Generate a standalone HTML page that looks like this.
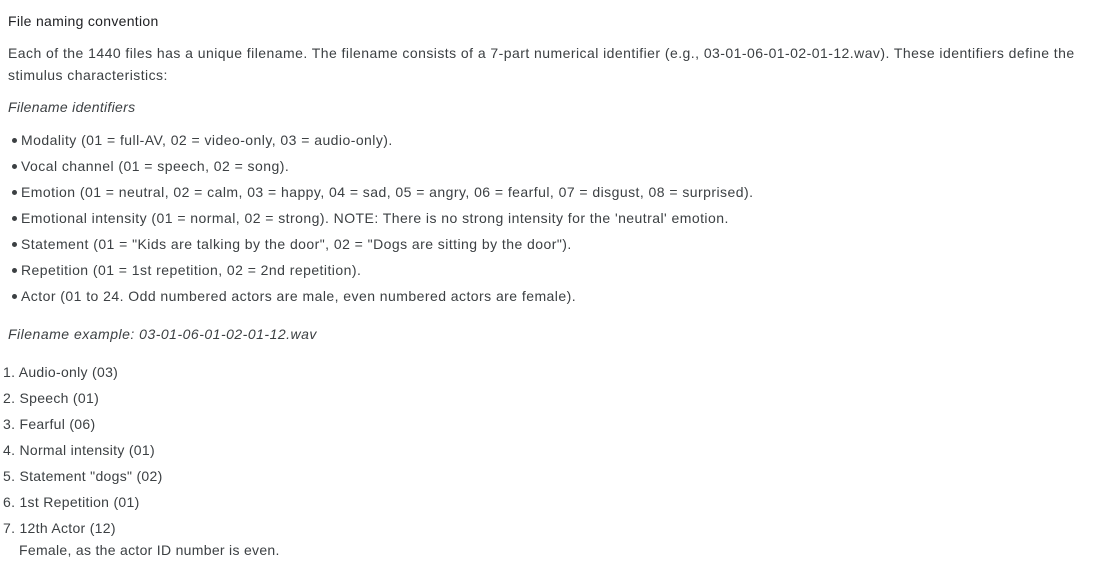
<!DOCTYPE html>
<html><head><meta charset="utf-8"><style>
html,body{margin:0;padding:0;background:#fff;width:1103px;height:566px;overflow:hidden}
body{font-family:"Liberation Sans",Arial,sans-serif;font-size:14px;color:#3c4043;letter-spacing:0.3px}
.l{position:absolute;line-height:20px;white-space:nowrap}
.w{letter-spacing:0.45px}
.i{font-style:italic}
.b::before{content:"";position:absolute;left:-9px;top:8px;width:5px;height:5px;border-radius:50%;background:#3c4043}
</style></head><body>
<div class="l" style="left:8px;top:11px;color:#202124">File naming convention</div>
<div class="l w" style="left:8px;top:43px">Each of the 1440 files has a unique filename. The filename consists of a 7-part numerical identifier (e.g., 03-01-06-01-02-01-12.wav). These identifiers define the</div>
<div class="l w" style="left:8px;top:65px">stimulus characteristics:</div>
<div class="l i" style="left:8px;top:97px">Filename identifiers</div>
<div class="l b w" style="left:21px;top:130px">Modality (01 = full-AV, 02 = video-only, 03 = audio-only).</div>
<div class="l b w" style="left:21px;top:156px">Vocal channel (01 = speech, 02 = song).</div>
<div class="l b w" style="left:21px;top:182px">Emotion (01 = neutral, 02 = calm, 03 = happy, 04 = sad, 05 = angry, 06 = fearful, 07 = disgust, 08 = surprised).</div>
<div class="l b w" style="left:21px;top:208px">Emotional intensity (01 = normal, 02 = strong). NOTE: There is no strong intensity for the 'neutral' emotion.</div>
<div class="l b w" style="left:21px;top:234px">Statement (01 = "Kids are talking by the door", 02 = "Dogs are sitting by the door").</div>
<div class="l b w" style="left:21px;top:260px">Repetition (01 = 1st repetition, 02 = 2nd repetition).</div>
<div class="l b w" style="left:21px;top:286px">Actor (01 to 24. Odd numbered actors are male, even numbered actors are female).</div>
<div class="l i" style="left:8px;top:324px;letter-spacing:0.5px">Filename example: 03-01-06-01-02-01-12.wav</div>
<div class="l" style="left:3px;top:362px">1. Audio-only (03)</div>
<div class="l" style="left:3px;top:388px">2. Speech (01)</div>
<div class="l" style="left:3px;top:414px">3. Fearful (06)</div>
<div class="l" style="left:3px;top:440px">4. Normal intensity (01)</div>
<div class="l" style="left:3px;top:466px">5. Statement "dogs" (02)</div>
<div class="l" style="left:3px;top:492px">6. 1st Repetition (01)</div>
<div class="l" style="left:3px;top:518px">7. 12th Actor (12)</div>
<div class="l" style="left:19px;top:540px">Female, as the actor ID number is even.</div>
</body></html>
